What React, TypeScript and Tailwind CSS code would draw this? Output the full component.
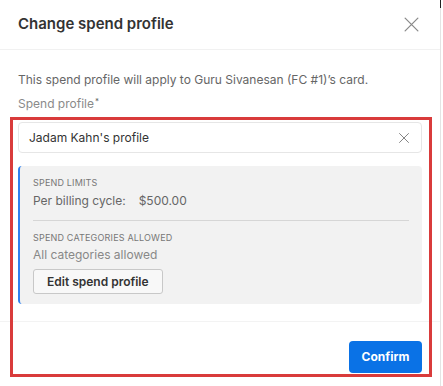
import React from 'react';

// Simple X glyph used for the dialog close and the input clear buttons
const CloseIcon = ({ size, stroke }: { size: number; stroke: string }) => (
    <svg width={size} height={size} viewBox="0 0 16 16" fill="none">
        <path d="M2 2L14 14M14 2L2 14" stroke={stroke} strokeWidth="1.2" strokeLinecap="round" />
    </svg>
);

const App: React.FC = () => {
    return (
        <div className="relative w-[443px] h-[386px] bg-white overflow-hidden" style={{ fontFamily: 'Inter, "Noto Sans", sans-serif' }}>
            <div className="flex flex-col w-[441px] h-full border-r border-[#e4e4e4]">
                {/* Header */}
                <div className="flex items-center justify-between h-[50px] pl-[18px] pr-[20px] border-b border-[#f1f1f1]">
                    <h1 className="text-[15px] font-semibold text-[#333]">Change spend profile</h1>
                    <CloseIcon size={17} stroke="#8a8a8a" />
                </div>

                {/* Body */}
                <div className="flex flex-col px-[18px] pt-[21px] pb-[17px] border-b border-[#f3f3f3]">
                    <p className="text-[12px] leading-[18px] text-[#666]">
                        This spend profile will apply to Guru Sivanesan (FC #1)’s card.
                    </p>
                    <label className="mt-[6px] text-[12px] leading-[18px] text-[#8a8a8a]">
                        Spend profile<sup className="text-[8px] text-[#666] ml-[1px]">*</sup>
                    </label>

                    <div className="mt-[9px] flex items-center justify-between h-[31px] pl-[10px] pr-[11px] rounded border border-[#e6e6e6] bg-white">
                        <span className="text-[12px] text-[#333]">Jadam Kahn's profile</span>
                        <CloseIcon size={12} stroke="#777" />
                    </div>

                    <div className="mt-[13px] flex flex-col pl-[13px] pr-[13px] pt-[11px] pb-[10px] rounded bg-[#f2f2f2] border-l-2 border-[#2f80ed]">
                        <span className="text-[9px] leading-[12px] uppercase tracking-[0.02em] text-[#777]">Spend limits</span>
                        <div className="mt-[3px] flex text-[12px] leading-[18px] text-[#666]">
                            <span>Per billing cycle:</span>
                            <span className="ml-[13px]">$500.00</span>
                        </div>
                        <div className="mt-[10px] h-px bg-[#d6d6d6]" />
                        <span className="mt-[11px] text-[9px] leading-[12px] uppercase tracking-[0.02em] text-[#777]">Spend categories allowed</span>
                        <span className="mt-[2px] text-[12px] leading-[18px] text-[#888]">All categories allowed</span>
                        <button className="mt-[5px] self-start h-[25px] px-[13px] rounded-[3px] border border-[#c8c8c8] bg-[#f8f8f8] text-[12px] font-semibold text-[#333]">
                            Edit spend profile
                        </button>
                    </div>
                </div>

                {/* Footer */}
                <div className="flex justify-end px-[18px] pt-[19px]">
                    <button className="h-[32px] w-[73px] rounded bg-[#0a72e6] text-[12px] font-bold text-white">
                        Confirm
                    </button>
                </div>
            </div>

            {/* Annotation frame drawn over the screenshot */}
            <div className="absolute left-[10px] top-[117px] w-[422px] h-[260px] border-[3px] border-[#d93b3b] pointer-events-none" />
            <div className="absolute right-[2px] top-0 w-px h-[8px] bg-[#222]" />
        </div>
    );
};

export default App;
